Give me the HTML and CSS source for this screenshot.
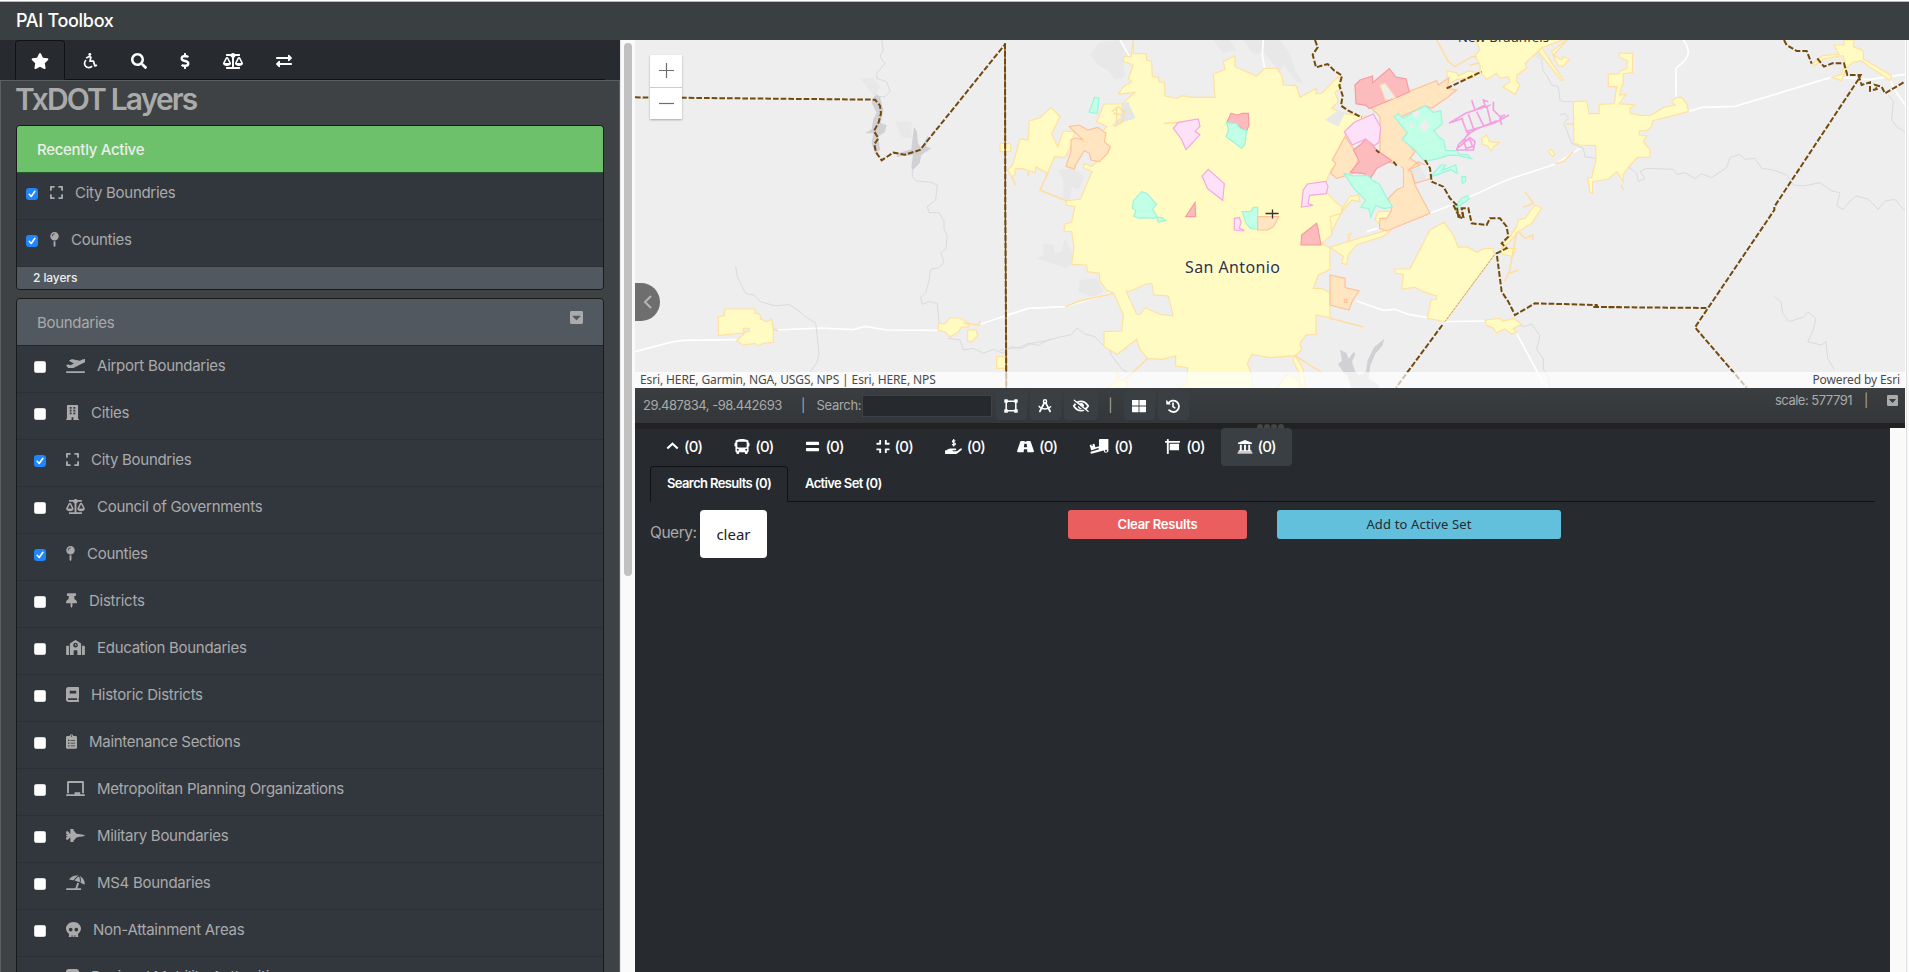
FILE: index.html
```html
<!DOCTYPE html>
<html lang="en">
<head>
<meta charset="utf-8">
<title>PAI Toolbox</title>
<link rel="stylesheet" href="styles.css">
</head>
<body>
<svg class="defs" width="0" height="0">
  <symbol id="star" viewBox="0 0 576 512"><path d="M259.3 17.8L194 150.2 47.9 171.5c-26.2 3.8-36.7 36.1-17.7 54.6l105.7 103-25 145.5c-4.5 26.3 23.2 46 46.4 33.7L288 439.6l130.7 68.7c23.2 12.2 50.9-7.4 46.4-33.7l-25-145.5 105.7-103c19-18.5 8.5-50.8-17.7-54.6L382 150.2 316.7 17.8c-11.7-23.6-45.6-23.9-57.4 0z"/></symbol>
  <symbol id="access" viewBox="0 0 512 512"><circle cx="250" cy="46" r="46"/><path d="M150 150l85-40 50 30-30 120h110l45 150 50-15" fill="none" stroke="currentColor" stroke-width="56" stroke-linecap="round" stroke-linejoin="round"/><path d="M130 230a135 135 0 1 0 190 190" fill="none" stroke="currentColor" stroke-width="54"/></symbol>
  <symbol id="search" viewBox="0 0 512 512"><path d="M505 442.7L405.3 343c-4.5-4.5-10.6-7-17-7H372c27.6-35.3 44-79.7 44-128C416 93.1 322.9 0 208 0S0 93.1 0 208s93.1 208 208 208c48.3 0 92.7-16.4 128-44v16.3c0 6.4 2.5 12.5 7 17l99.7 99.7c9.4 9.4 24.6 9.4 33.9 0l28.3-28.3c9.4-9.4 9.4-24.6.1-34zM208 336c-70.7 0-128-57.2-128-128 0-70.7 57.2-128 128-128 70.7 0 128 57.2 128 128 0 70.7-57.2 128-128 128z"/></symbol>
  <symbol id="dollar" viewBox="0 0 288 512"><path d="M209.2 233.4l-108-31.6C88.7 198.2 80 186.5 80 173.5c0-16.3 13.2-29.5 29.5-29.5h66.3c12.2 0 24.2 3.7 34.2 10.5 6.1 4.1 14.3 3.1 19.5-2l34.8-34c7.1-6.9 6.1-18.4-1.8-24.5C238 74.8 207.4 64.1 176 64V16c0-8.8-7.2-16-16-16h-32c-8.8 0-16 7.2-16 16v48h-2.5C45.8 64-5.4 118.7.5 183.6c4.2 46.1 39.4 83.6 83.8 96.6l102.5 30c12.5 3.7 21.2 15.3 21.2 28.3 0 16.3-13.2 29.5-29.5 29.5h-66.3C100 368 88 364.3 78 357.5c-6.1-4.1-14.3-3.1-19.5 2l-34.8 34c-7.1 6.9-6.1 18.4 1.8 24.5 24.5 19.2 55.1 29.9 86.5 30v48c0 8.800 7.200 16 16 16h32c8.800 0 16-7.200 16-16v-48.200c46.600-.9 90.300-28.600 105.700-72.700 21.500-61.600-14.600-124.800-72.500-141.700z"/></symbol>
  <symbol id="scale" viewBox="0 0 640 512"><path d="M256 336h-.02c0-16.18 1.34-8.73-85.05-181.51-17.65-35.29-68.19-35.36-85.87 0C-2.06 328.75.02 320.33.02 336H0c0 44.18 57.31 80 128 80s128-35.82 128-80zM128 176l72 144H56l72-144zm511.98 160c0-16.18 1.34-8.73-85.05-181.51-17.65-35.29-68.19-35.36-85.87 0-87.12 174.26-85.04 165.84-85.04 181.51H384c0 44.18 57.31 80 128 80s128-35.82 128-80h-.02zM440 320l72-144 72 144H440zm88 128H352V153.25c23.51-10.29 41.16-31.48 46.39-57.25H528c8.84 0 16-7.16 16-16V48c0-8.84-7.16-16-16-16H383.64C369.04 12.68 346.09 0 320 0s-49.04 12.68-63.64 32H112c-8.84 0-16 7.16-16 16v32c0 8.84 7.16 16 16 16h129.61c5.23 25.76 22.87 46.96 46.39 57.25V448H112c-8.84 0-16 7.16-16 16v32c0 8.84 7.16 16 16 16h416c8.84 0 16-7.16 16-16v-32c0-8.84-7.16-16-16-16z"/></symbol>
  <symbol id="exchange" viewBox="0 0 512 512"><path d="M0 168v-16c0-13.255 10.745-24 24-24h360V80c0-21.367 25.899-32.042 40.971-16.971l80 80c9.372 9.373 9.372 24.569 0 33.941l-80 80C409.956 271.982 384 261.456 384 240v-48H24c-13.255 0-24-10.745-24-24zm488 152H128v-48c0-21.314-25.862-32.08-40.971-16.971l-80 80c-9.372 9.373-9.372 24.569 0 33.941l80 80C102.057 463.997 128 453.437 128 432v-48h360c13.255 0 24-10.745 24-24v-16c0-13.255-10.745-24-24-24z"/></symbol>
  <symbol id="pin" viewBox="0 0 288 512"><path d="M112 316.94v156.69l22.02 33.02c4.75 7.12 15.22 7.12 19.97 0L176 473.63V316.94c-10.39 1.92-21.06 3.06-32 3.06s-21.61-1.14-32-3.06zM144 0C64.47 0 0 64.47 0 144s64.47 144 144 144 144-64.47 144-144S223.53 0 144 0zm0 76c-37.5 0-68 30.5-68 68 0 6.62-5.38 12-12 12s-12-5.38-12-12c0-50.73 41.28-92 92-92 6.62 0 12 5.38 12 12s-5.38 12-12 12z"/></symbol>
  <symbol id="tack" viewBox="0 0 384 512"><path d="M298.028 214.267L285.793 96H328c13.255 0 24-10.745 24-24V24c0-13.255-10.745-24-24-24H56C42.745 0 32 10.745 32 24v48c0 13.255 10.745 24 24 24h42.207L85.972 214.267C37.465 236.82 0 277.261 0 328c0 13.255 10.745 24 24 24h136v104.007c0 1.242.289 2.467.845 3.578l24 48c2.941 5.882 11.364 5.893 14.311 0l24-48a8.008 8.008 0 0 0 .845-3.578V352h136c13.255 0 24-10.745 24-24-.001-51.183-37.983-91.42-85.973-113.733z"/></symbol>
  <symbol id="expand" viewBox="0 0 448 512"><path d="M0 180V56q0-24 24-24h124q12 0 12 12v40q0 12-12 12H64v84q0 12-12 12H12q-12 0-12-12zM288 44v40q0 12 12 12h84v84q0 12 12 12h40q12 0 12-12V56q0-24-24-24H300q-12 0-12 12zM436 320h-40q-12 0-12 12v84h-84q-12 0-12 12v40q0 12 12 12h124q24 0 24-24V332q0-12-12-12zM160 468v-40q0-12-12-12H64v-84q0-12-12-12H12q-12 0-12 12v124q0 24 24 24h124q12 0 12-12z"/></symbol>
  <symbol id="plane-up" viewBox="0 0 640 512"><path d="M16 448h608q16 0 16 16v32q0 16-16 16H16q-16 0-16-16v-32q0-16 16-16zM80 341q-10-1-17-9L4 267q-8-12 5-20l52-27q10-5 20 0l61 31 124-64L105 102q-14-9 0-19l82-42q14-7 30-2l253 57 83-43c44-22 95-32 133-1 21 32-14 77-66 104L250 338q-15 6-30 6z"/></symbol>
  <symbol id="building" viewBox="0 0 448 512"><path fill-rule="evenodd" d="M436 480h-20V24q0-24-24-24H56Q32 0 32 24v456H12q-12 0-12 12v20h192v-84q0-12 12-12h40q12 0 12 12v84h192v-20q0-12-12-12zM128 64h64v64h-64zM256 64h64v64h-64zM128 160h64v64h-64zM256 160h64v64h-64zM128 256h64v64h-64zM256 256h64v64h-64z"/></symbol>
  <symbol id="school" viewBox="0 0 640 512"><path fill-rule="evenodd" d="M0 224v272q0 16 16 16h80V192H32q-32 0-32 32zM544 192v320h80q16 0 16-16V224q0-32-32-32zM498 115L338 8q-18-12-36 0L142 115q-14 10-14 26v371h128V368q0-16 16-16h96q16 0 16 16v144h128V141q0-16-14-26zM320 96a80 80 0 1 1 0 160 80 80 0 0 1 0-160zM304 128v58h60v-28h-32v-30z"/></symbol>
  <symbol id="book" viewBox="0 0 448 512"><path fill-rule="evenodd" d="M448 360V24q0-24-24-24H96Q0 0 0 96v320q0 96 96 96h328q24 0 24-24v-16q0-11-9-19-7-27 0-74 9-8 9-19zM128 134q0-6 6-6h212q6 0 6 6v84q0 6-6 6H134q-6 0-6-6zM381 448H96q-32-3-32-32t32-32h285q-4 35 0 64z"/></symbol>
  <symbol id="clip" viewBox="0 0 384 512"><path fill-rule="evenodd" d="M336 64h-80Q256 0 192 0t-64 64H48Q0 64 0 112v352q0 48 48 48h288q48 0 48-48V112q0-48-48-48zM192 40q24 0 24 24t-24 24-24-24 24-24zM72 196h48v40H72zM160 200h160v32H160zM72 292h48v40H72zM160 296h160v32H160zM72 388h48v40H72zM160 392h160v32H160z"/></symbol>
  <symbol id="board" viewBox="0 0 640 512"><path d="M96 64h448v352h64V40q0-40-38-40H70Q32 0 32 40v376h64zM624 448H480v-64H288v64H16q-16 0-16 16v32q0 16 16 16h608q16 0 16-16v-32q0-16-16-16z"/></symbol>
  <symbol id="jet" viewBox="0 0 640 512"><path d="M544 224l-128-16-49-16h-15L228 54h25q25-2 28-11t-41-11H144v160h-14L64 112H16L0 128v64l16 16v16h48v8L0 240v32l64 8v8H16v16L0 320v64l16 16h48l66-80h14v160h96q42-2 41-11t-28-11h-25l124-138h15l49-16 128-16q96-22 96-32t-96-32z"/></symbol>
  <symbol id="beach" viewBox="0 0 640 512"><path d="M115 137C185 37 312-10 430 28c-62 20-125 75-170 148l-139-17q-14-8-6-22zM460 38c105 46 180 155 176 274q-3 12-18 8l-127-58c20-90 12-170-31-224zM290 188c50-80 104-125 150-140 30 44 40 120 20 203zM496 448H382l59-163-60-22-67 185H16q-16 0-16 16v32q0 16 16 16h480q16 0 16-16v-32q0-16-16-16z"/></symbol>
  <symbol id="skull" viewBox="0 0 512 512"><path fill-rule="evenodd" d="M256 0C115 0 0 100 0 224c0 70 37 132 94 173 10 7 15 18 13 30l-13 66q-2 19 15 19h83v-56q0-8 8-8h16q8 0 8 8v56h64v-56q0-8 8-8h16q8 0 8 8v56h83q17 0 15-19l-13-66c-2-12 3-23 13-30 57-41 94-103 94-173C512 100 397 0 256 0zM160 320a64 64 0 1 1 0-128 64 64 0 0 1 0 128zM352 320a64 64 0 1 1 0-128 64 64 0 0 1 0 128z"/></symbol>
  <symbol id="caret-box" viewBox="0 0 448 512"><path fill-rule="evenodd" d="M48 32h352q48 0 48 48v352q0 48-48 48H48q-48 0-48-48V80q0-48 48-48zM92 220l123 124q9 8 18 0l123-124q12-22-9-28H101q-21 6-9 28z"/></symbol>
  <symbol id="chev" viewBox="0 0 448 512"><path d="M45 325L224 160l179 165" fill="none" stroke="currentColor" stroke-width="74"/></symbol>
  <symbol id="bus" viewBox="0 0 512 512"><path fill-rule="evenodd" d="M488 128h-8V80c0-45-99-80-224-80S32 35 32 80v48h-8q-24 0-24 24v80q0 24 24 24h8v160q0 32 32 32v32q0 32 32 32h32q32 0 32-32v-32h192v32q0 32 32 32h32q32 0 32-32v-32q32 0 32-32V256h8q24 0 24-24v-80q0-24-24-24zM112 400a32 32 0 1 1 0-64 32 32 0 0 1 0 64zM128 288q-32 0-32-32V128q0-32 32-32h256q32 0 32 32v128q0 32-32 32zM400 400a32 32 0 1 1 0-64 32 32 0 0 1 0 64z"/></symbol>
  <symbol id="equals" viewBox="0 0 448 512"><rect y="96" width="448" height="112" rx="30"/><rect y="304" width="448" height="112" rx="30"/></symbol>
  <symbol id="compress" viewBox="0 0 448 512"><path d="M436 192H312q-24 0-24-24V44q0-12 12-12h40q12 0 12 12v84h84q12 0 12 12v40q0 12-12 12zM160 168V44q0-12-12-12h-40q-12 0-12 12v84H12q-12 0-12 12v40q0 12 12 12h124q24 0 24-24zM160 468V344q0-24-24-24H12q-12 0-12 12v40q0 12 12 12h84v84q0 12 12 12h40q12 0 12-12zM352 468v-84h84q12 0 12-12v-40q0-12-12-12H312q-24 0-24 24v124q0 12 12 12h40q12 0 12-12z"/></symbol>
  <symbol id="handusd" viewBox="0 0 576 512"><path d="M565 328c-12-11-31-10-43 0l-92 74q-17 14-40 14H272q-16-2-16-16t16-16h78q32-4 34-32t-32-32H192q-60 0-94 27l-47 37H16q-16 0-16 16v96q0 16 16 16h357q23 0 40-14l151-121q24-23 1-49z"/><path d="M350 72q-20-20-55-20c-55 0-55 55-8 68 60 16 72 32 66 56-8 34-80 34-114 2M294 0v260" fill="none" stroke="currentColor" stroke-width="42"/></symbol>
  <symbol id="road" viewBox="0 0 576 512"><path fill-rule="evenodd" d="M573 403L461 80q-8-16-24-16H318l4 32h-68l4-32H139q-16 0-24 16L3 403q-10 45 29 45h192l11-96h106l11 96h192q39 0 29-45zM247 160h82l14 120H233z"/></symbol>
  <symbol id="truck" viewBox="0 0 640 512"><path fill-rule="evenodd" d="M50 376L5 222q-5-15 9-20l46-13 14 50 38-12-14-50 50-14q15-2 20 12l29 103 122-34V32q0-32 32-32h289v368a80 80 0 1 1-158 22L63 505q-16 4-20-10l-16-44q-4-13 10-18l285-79-28-50-225 76q-15 4-19-4zM560 440a36 36 0 1 0 0-72 36 36 0 0 0 0 72z"/></symbol>
  <symbol id="sign" viewBox="0 0 512 512"><path d="M496 64H128V16q0-16-16-16H80Q64 0 64 16v48H16Q0 64 0 80v32q0 16 16 16h48v368q0 16 16 16h32q16 0 16-16V128h368q16 0 16-16V80q0-16-16-16zM160 384h320V160H160z"/></symbol>
  <symbol id="bank" viewBox="0 0 512 512"><path d="M496 128v28q0 12-12 12H28q-12 0-12-12v-28L256 32zM80 192h64v192h80V192h64v192h80V192h64v192h24q24 0 24 24v24H32v-24q0-24 24-24h24zM488 448H24q-24 0-24 24v24h512v-24q0-24-24-24z"/></symbol>
  <symbol id="polygon" viewBox="0 0 512 512"><path d="M80 80H432V432H80z" fill="none" stroke="currentColor" stroke-width="56"/><g><rect x="10" y="10" width="130" height="130" rx="22"/><rect x="372" y="10" width="130" height="130" rx="22"/><rect x="10" y="372" width="130" height="130" rx="22"/><rect x="372" y="372" width="130" height="130" rx="22"/></g></symbol>
  <symbol id="compass" viewBox="0 0 512 512"><g fill="none" stroke="currentColor"><circle cx="256" cy="90" r="60" stroke-width="52"/><path d="M228 140L70 450M284 140l158 310" stroke-width="68" stroke-linecap="round"/><path d="M40 268q45 65 120 82 180 45 300-68" stroke-width="54" stroke-linecap="round"/></g></symbol>
  <symbol id="eye-off" viewBox="0 0 640 512"><path d="M30 256Q150 70 320 70t290 186Q490 442 320 442T30 256z" fill="none" stroke="currentColor" stroke-width="70"/><path d="M320 135a120 120 0 0 1 112 165L230 170q40-35 90-35zM200 235a120 120 0 0 0 170 132z"/><path d="M30 70L570 490" stroke="#3a3f44" stroke-width="70"/><path d="M50 24L604 470" stroke="currentColor" stroke-width="50" stroke-linecap="round"/></symbol>
  <symbol id="grid" viewBox="0 0 512 512"><path d="M18 32h222v208H0V50q0-18 18-18zM272 32h222q18 0 18 18v190H272zM0 272h240v208H18q-18 0-18-18zM272 272h240v190q0 18-18 18H272z"/></symbol>
  <symbol id="history" viewBox="0 0 512 512"><g fill="none" stroke="currentColor"><path d="M90 155a208 208 0 1 1 25 255" stroke-width="66" stroke-linecap="round"/><path d="M256 150v125l65 48" stroke-width="60" stroke-linecap="round"/></g><path d="M8 30l172 172H20q-12 0-12-12z"/></symbol>
  <symbol id="drum" viewBox="0 0 448 512"><path d="M0 100Q0 0 100 0h248q100 0 100 100v412H0z"/></symbol>
  <symbol id="check" viewBox="0 0 12 12"><path d="M3.2 6.3l2 2.2L8.9 3.3" fill="none" stroke="#fff" stroke-width="1.6" stroke-linecap="round" stroke-linejoin="round"/></symbol>
</svg>

<header class="topbar">PAI Toolbox</header>
<div class="workspace">
  <aside class="sidebar">
    <nav class="side-tabs">
      <a class="side-tab active"><svg width="18" height="16"><use href="#star"/></svg></a>
      <a class="side-tab"><svg width="16" height="16"><use href="#access"/></svg></a>
      <a class="side-tab"><svg width="16" height="16"><use href="#search"/></svg></a>
      <a class="side-tab"><svg width="10" height="16"><use href="#dollar"/></svg></a>
      <a class="side-tab"><svg width="20" height="16"><use href="#scale"/></svg></a>
      <a class="side-tab"><svg width="16" height="16"><use href="#exchange"/></svg></a>
    </nav>
    <div class="side-body">
      <h1>TxDOT Layers</h1>
      <section class="card recent">
        <div class="card-head green">Recently Active</div>
        <div class="row"><i class="box on"><svg width="12" height="12"><use href="#check"/></svg></i><svg width="13" height="15"><use href="#expand"/></svg><span>City Boundries</span></div>
        <div class="row"><i class="box on"><svg width="12" height="12"><use href="#check"/></svg></i><svg width="9" height="15"><use href="#pin"/></svg><span>Counties</span></div>
        <div class="card-foot">2 layers</div>
      </section>
      <section class="card layers">
        <div class="card-head">Boundaries<svg width="13" height="15"><use href="#caret-box"/></svg></div>
        <div class="row"><i class="box"></i><svg width="19" height="15"><use href="#plane-up"/></svg><span>Airport Boundaries</span></div>
        <div class="row"><i class="box"></i><svg width="13" height="15"><use href="#building"/></svg><span>Cities</span></div>
        <div class="row"><i class="box on"><svg width="12" height="12"><use href="#check"/></svg></i><svg width="13" height="15"><use href="#expand"/></svg><span>City Boundries</span></div>
        <div class="row"><i class="box"></i><svg width="19" height="15"><use href="#scale"/></svg><span>Council of Governments</span></div>
        <div class="row"><i class="box on"><svg width="12" height="12"><use href="#check"/></svg></i><svg width="9" height="15"><use href="#pin"/></svg><span>Counties</span></div>
        <div class="row"><i class="box"></i><svg width="11" height="15"><use href="#tack"/></svg><span>Districts</span></div>
        <div class="row"><i class="box"></i><svg width="19" height="15"><use href="#school"/></svg><span>Education Boundaries</span></div>
        <div class="row"><i class="box"></i><svg width="13" height="15"><use href="#book"/></svg><span>Historic Districts</span></div>
        <div class="row"><i class="box"></i><svg width="11" height="15"><use href="#clip"/></svg><span>Maintenance Sections</span></div>
        <div class="row"><i class="box"></i><svg width="19" height="15"><use href="#board"/></svg><span>Metropolitan Planning Organizations</span></div>
        <div class="row"><i class="box"></i><svg width="19" height="15"><use href="#jet"/></svg><span>Military Boundaries</span></div>
        <div class="row"><i class="box"></i><svg width="19" height="15"><use href="#beach"/></svg><span>MS4 Boundaries</span></div>
        <div class="row"><i class="box"></i><svg width="15" height="15"><use href="#skull"/></svg><span>Non-Attainment Areas</span></div>
        <div class="row"><i class="box"></i><svg width="13" height="15"><use href="#drum"/></svg><span>Regional Mobility Authorities</span></div>
      </section>
    </div>
  </aside>
  <div class="scroll-track"><div class="scroll-thumb"></div></div>
  <main class="main">
    <div class="map">
      <svg class="map-svg" viewBox="635 40 1270 348" width="1270" height="348">
        <g transform="translate(1000 35) scale(.33333)">
          <g class="shade">
            <path d="M270 60l30-40 60-5 30 40-20 30 5 40-30 10-20-30-25-10z"/><path d="M640 15l50 0 20 30-40 10zM730 15l110 0 30 40 15 50 25 40-20-5-40-50-10 20-50-60-30 10z"/><path d="M130 625l30 5 5 25 20-5 10-40 20 40 5 30-20 20-30-10-60-20 20-10z"/><path d="M240 735l50-5 20 40-30 15-45-15z"/><path d="M175 405l40-5 40 25-20 40-20-10-5 50-20-10 0-60z"/><path d="M1200 390l50-10 30 50-30 20z"/>
          </g>
          <path class="road" d="M0 848L85 820 195 815 330 775M360 15l35 60M790 15l-3 45 8 45"/>
          <path class="river" d="M0 945l60-8 25-12 30 6 25-14 35-10 40-8 15-20 25 18 30 8 20 22 20 5 10 30 30 40 20 12"/>
          <path class="city" d="M400 15V55L438 57 440 75 455 80 457 125 475 127 477 140 493 143 495 183 530 190 548 182 575 187 645 187 640 118 675 103 670 80 705 62 705 95 770 123 795 100 830 100 845 120 850 150 888 152 900 187 950 160 948 176 965 175 1015 125 1025 160 1005 172 1015 200 995 220 1030 235 1100 245 1035 295 1060 380 995 400 970 460 1005 500 1025 515 1025 535 995 545 995 600 965 625 990 640 990 703 955 720 940 760 965 760 990 775 990 848 948 840 948 898 918 900 900 925 905 945 885 962 810 968 755 958 742 985 755 1020 755 1060H535L560 1045 563 998 527 993 527 963 485 973 443 970 420 945 410 913 352 958 312 935 312 890 365 888 370 840 342 775 320 765 300 740 298 715 262 710 260 690 215 688 222 635 215 590 192 588 195 567 215 562 225 515 198 510 200 498 242 492 265 435 277 410 250 398 252 385 275 395 300 370 290 310 320 275 290 260 312 207 365 207 405 172 355 178 370 155 395 140 385 130 400 90 370 80 372 65 393 65z"/>
          <path class="land" d="M378 768L392 768 435 748 455 745 462 780 505 783 520 843 480 838 435 818 422 838 410 838z"/>
          <path class="nook" d="M365 205l20-5 10 25 12 25-35 10-40 15 30-30z"/>
          <path class="citylite" d="M335 230l20-15 18 15-5 30-25 15M340 235l25 5M350 215v50"/>
          <path class="city" d="M88 258L120 248 153 218 180 245 165 275 155 297 173 335 190 288 225 290 210 340 195 367 163 365 143 415 108 395 105 413 65 400 45 402 45 420 35 425 23 405 38 390 60 312 85 315zM0 325h30l2 5v20H0z"/>
          <path class="citylite" d="M143 415L120 465 200 498M195 815L240 798 340 775M443 970L375 1035M885 962l80 50M35 425l12 25M85 410v14M493 265l40-2"/>
          <path class="city" d="M885 962l25 40 5 58h-15l-2-45-20-40zM830 1060l30-40 30 10 20 30zM320 1060l30-20v-30l10 25 20 5v20z"/>
          <path class="orange" d="M208 275l30-5 25 15 30-8 25 18-5 25 18 15-8 20-25 25-25-5-5-20-15-8-25 40-5 15-25-8 15-45v-35l15-5 20 5z"/>
          <path class="land" d="M248 320l15 3-10 12z"/>
          <path class="teal" d="M283 187l14 3-5 46-25-5 10-25z"/>
          <path class="pink" d="M520 280l15-18 60-10 5 22-15 15 15 10-42 45-14-32zM625 403l48 43-5 50-45-35-17-38zM703 550l15-3 5 15-5 18 14 5-2 3-27-3z"/>
          <path class="red" d="M680 263l13-28 20 5 15-5h17l2 35-8 20-22-18zM585 503l2 42h-30z"/>
          <path class="teal" d="M680 263l30 3 10 14 20 7-5 40-10 13-47-35 8-20zM425 470l15 5 30 33-12 15 14 22-12 5-20-2-20 2-18-5 5-18-10-8 3-22zM470 547h15l12 10-22 4zM727 530h25l8-13h13v65h-20l-15-17z"/>
          <path class="orange" d="M773 545h63l-15 30-20 10h-28z"/>
        </g>
        <g transform="translate(1300 35) scale(.33333)">
          <path class="road" d="M200 590L390 535 460 508 620 435 765 388 840 340M170 798l80 28 35-3 40 15 60 10 50 12 120-2M650 895l80 150"/>
          <path class="river" d="M720 45c10 40 0 60 20 75l15 30 20 5 5 40 10 5 25 0M780 240l15-5 10 15-15 15 10 20 15 40 35 15 5 25 30 5M655 870l20 5 20-8 25 35-10 40 20 30 0 30 15 25 5 35"/>
          <path class="water" d="M120 945l18 8 8 18 15-20 5 5-10 25 10 30 12 10 20-10 5-35 20-40 30-25-5 20-22 25-15 35-5 40 25 15 10 15h-85l-15-40-15-15-12-20 12-8z"/>
          <path class="shade" d="M75 255l40-30 20 10-20 40zM700 60l20-20 18 20-12 20z"/>
          <path class="city" d="M520 0L540 45 525 62 540 90 540 110 560 133 590 115 600 130 625 125 630 140 608 155 645 178 660 150 650 140 650 120 680 100 675 85 725 38 800 10z"/>
          <path class="city" d="M725 38l65 97-5 2-70-87zM755 50l50-40-45 50 25 15 5-10 18 8-20 22-15-5z"/>
          <path class="city" d="M440 108l30 5 5 10 30-15 25 5-10 15-50 5-25 15z"/>
          <path class="citylite" d="M410 15l35 65 20 15 50-30 15 0M90 850l100 26M510 90l25-5"/>
          <path class="city" d="M90 637l90-28 70-20-10-20-15-15 10-25h45l-10 60-20 15-80 25-25 30-5 30-15-5 5-20-15-10zM95 590l-5-45 35-10 5-20 20-30 25-5 5 20-25-5-30 35zM145 600l8-5-8 25z"/>
          <path class="city" d="M432 562L390 585 330 702 285 702 285 715 310 718 305 762 345 757 370 770 410 783 410 793 393 795 382 850 435 860 583 660 578 640 555 640 530 652 500 635 475 637 460 600z"/>
          <path class="city" d="M555 855l45-5 10 8 30-8 25 18-25 12 10 12-15 5-20-15-25 12-10-15-20-8zM545 310l15-10 8 20 30 3-15 10-10 15-10-15-15-5zM745 348l8-5 12 15-8 6z"/>
          <path class="city" d="M605 640l20-15 30-35 40-25 30-45-20-10-30 40-20 5-5 20-20 30-22 20-5 30 35 10 10-25z"/>
          <path class="citylite" d="M675 470l25 35-30 12M650 590l-22 120-14 28M628 715l28-10M655 590l20 20 22-10 3 15"/>
          <path class="orange" d="M210 215L410 137 415 150 447 128 442 160 470 165 445 185 395 220 375 213 300 247 325 290 310 310 345 350 330 370 360 390 325 405 335 410 345 450 390 535 260 588 238 580 240 550 260 550 275 525 265 490 290 465 310 455 310 400 280 385 240 375 240 245zM135 305l25 35 20 15-20 60-50 15-18-15 15-30-10-10zM90 720l45 10v28l42 10-20 30-10 27-57-15z"/>
          <path class="orangeline" d="M325 405l30-25 20 10M335 415l10 30 50-15M133 795l8-3v10h-8z"/>
          <path class="land nostroke" d="M245 392l50-5 13 15v52l-45 15-25-50z"/>
          <path class="red" d="M165 150l15-15 38-12v20l50-42 20 25 30 5 10 40-35 15-85 35-10-10-30-5zM160 345l20-15 20-20 30 35 45 32-45 23-25 40-12-24-42-4 27-33z M5 600l45-35 5 20 8 45H3z"/>
          <path class="land" d="M240 150l15-5 32 43-30 8z"/>
          <path class="pink" d="M133 290l30-28 57-25 22 40-5 45-15 10-25-20-40 18zM10 465l12-18 55-8 7 15-5 22-50 5-5 25 15 5-35 5z"/>
          <path class="teal" d="M283 245l12-8 15 12 65-37 25 20 22-5 5 40-25 20 15 20 15 10 5 30 35 0 5 10 25 2 12 12-40-10-30 0-30 10-40 8-30-35-37-30 15-20zM132 415l30 8 40-2 15 15 20 10 25 45 15 25-25 5-25-10-15 35-5-25-25-5 15-20-35-35zM392 425l30-35 15 0-10 15 40-15 5 25-20-10-30 10zM485 425h12v15l-10 5zM465 512l20-22 18-8 5 10-30 20-10 20z"/>
          <path class="land nostroke" d="M335 235l20-10 5 15-15 10zM358 275l15-25 15 20-15 25zM330 265h8v12h-8z"/>
          <path class="magenta" d="M447 265l50-30 75-25M455 262l35-12M515 195l10 30 30-15-5-15 15 5M485 250l15 40 8 10M505 238l18 50M530 230l22 45M560 212l12 50M497 290l85-25 45-25M500 300l30-18 60-25M580 200l0 25 20 20 15-5M605 270l-5-20 10-10M510 290l-15 20-20 20-5 15h50l5-25-15-12-35 30M490 315l20 0 8 20-20 5z"/>
          <path class="citylite" d="M820 350l-30 30-25 6M797 267h25"/>
        </g>
        <g transform="translate(1580 35) scale(.33333)">
          <path class="road" d="M310 15c30 40 10 60-22 85v85M325 230L365 217 465 214 760 125M780 128l90 5 105-15M930 130c10 40 35 60 45 80"/>
          <path class="river" d="M145 395l25 20 5 25 20-10-15-20 20-10 80 3 10 15 25-5 30 18 20-15 30 12 45-30 10-30 30-10 15 15 30-3 20 30 35 5 40 15 20 30 30 3 50-10 35 25 25 5-10 40 20 10 20-25 20-15 35 10 30 30 20-25 30-5 25 30 30 15 15 30M925 180l15 20-5 55 15 20 25 15M583 785l20 15 5 35 20 25 45-15 10-15 25 20-10 40-15 30 40 10 15-10 5 50 20 35"/>
          <path class="city" d="M-20 200L20 198 27 236 57 236 57 208 103 206 110 155 85 155 85 118 118 116 120 108 140 102 143 78 118 66 118 54 158 55 158 113 130 116 130 142 118 180 138 178 118 206 165 210 150 220 150 235 185 242 215 240 250 218 285 210 275 200 290 188 305 187 322 210 325 230 217 258 215 275 200 287 178 288 178 300 200 302 190 320 210 345 210 366 172 367 147 395 130 418 130 440 110 410 85 432 38 440 38 475 30 472 23 428 35 428 48 375 47 332 0 330-18 325z"/>
          <path class="city" d="M762 30l30 0 0-15h30l-2 20 30 12 0 25 35 20 50 30-5 15-20-15-40-25-25-20-25 5-20 15-15 40-30-10 30-10 10-35-5-20-60 10-25 20-8-5 30-25 50-5z"/>
          <path class="citylite" d="M123 450l8 15"/>
        </g>
        <g transform="translate(630 35) scale(.33333)">
          <path class="road" d="M15 950L130 920 160 916 320 914M440 885L570 879 670 884 705 874 770 885 925 886M1050 868L1195 820"/>
          <path class="river" d="M755 15l5 30-10 20 15 20-25 30 0 15 30 10 10 30-15 15-25 0M847 400l0 25 10 12 45 5 20 8-5 45-25 20 5 18 30 0 15 25 0 25 10 20-5 40-15 10 10 30-15 15-25 5-5 35-10 35-15 15 5 20 20-8 25 5 5 60M317 695l5 30 10 20 15 30 25 5 20 20 40 12 45-3 25 15 30 25 25 15 10 90-5 25-20 30M955 910l35 5 10 30 30-5 30 15 30-12 30 12 20-20 35 5 30-15 55-10"/>
          <path class="water" d="M735 175l15 10 10 40-8 40 18 5-5 20-20 15 5 40-15 10-10-30 5-30-25 0 20-12 5-30 10-20-15-30zM852 275l9 15 3 35 10 15 20-40-5 35 15 5-30 20-5 25-20 20-5-10 5-35-50 5 10-12 35-10z"/>
          <path class="shade" d="M690 130l40 0 20 25-15 30-25-30zM795 260l50 0 0 50-30-5z"/>
          <path class="city" d="M285 822H375V835L390 838 392 852 410 860 425 852 430 885 430 922 400 925 385 932 375 925 340 930 320 918 345 893 265 902 265 845 283 842zM925 865l20 2 15-18 30 0 25 15 0 12-20 0-10 15-25 15-15-15-20-5zM1013 885l25 0 5 15-15 20-15-2zM1100 965h28v35h-28z"/>
          <path class="land" d="M340 880h18v10h-18z"/>
          <path class="citylite" d="M1000 865l48 5 2-12M430 882l15 5"/>
          <path class="county" d="M15 187L735 194 750 212 753 235 746 262 732 288 745 310 733 328 738 352 755 376 770 366 790 353 825 359 860 348 870 345 1125 28"/>
          <path class="county thin" d="M1125 25L1126 530 1129 1060"/><path class="county" d="M1125 25L1126 530 1129 1060"/>
        </g>
        <g transform="translate(1300 35) scale(.33333)">
          <path class="county" d="M45 15l8 22-15 22 10 38 35-10 20 20 23 15-8 30 10 30-5 30 22 15 40 20M228 345l10 8M280 380l10 12M440 160l105-50M375 375l15 25 5 40 35 15 20 35 20 20 5 35 15 5-5-30 20 0 10 45 45 5 10-20 30 0 20 25 5 30-20 20 15 15-30 15 15 115 20 30 20 40 60-35 185 5 3 6H960"/>
          <path class="county faint" d="M583 660L435 860"/><path class="county" d="M427 870L288 1058M460 510l15 30 15 5-5-25"/>
        </g>
        <g transform="translate(1580 35) scale(.33333)">
          <path class="county" d="M40 816l345 3M612 15l8 15 30 18 30 0 15 38M712 70l20 25 25-10 35 0 10 35 40 0-8 15L583 515l0 10L345 877 500 1058M835 120l10 30 25-8 0 25 20-5-5-12 20 5 10 20 65-38"/>
        </g>
        <text class="place" x="1185" y="272.500" textLength="95">San Antonio</text>
        <text class="place small" x="1458" y="42" textLength="91">New Braunfels</text>
        <path d="M1265.500 213.500h13M1272.500 209.500v9" stroke="#333" stroke-width="1.300"/>
      </svg>
      <div class="zoomer"><span><svg width="15" height="15"><path d="M7.500 0v15M0 7.500h15"/></svg></span><span><svg width="15" height="15"><path d="M0 7.500h15"/></svg></span></div>
      <div class="collapse"><svg width="9" height="14"><path d="M8 1L2 7l6 6"/></svg></div>
      <div class="attribution"><span class="credits">Esri, HERE, Garmin, NGA, USGS, NPS | Esri, HERE, NPS</span><span class="powered">Powered by Esri</span></div>
    </div>
    <div class="toolbar">
      <span class="coords">29.487834, -98.442693</span><span class="sep">|</span><label>Search:</label><i class="field"></i>
      <div class="tools">
        <b class="tool"><svg width="14" height="14"><use href="#polygon"/></svg></b>
        <b class="tool"><svg width="14" height="14"><use href="#compass"/></svg></b>
        <b class="tool wide"><svg width="16" height="14"><use href="#eye-off"/></svg></b>
      </div>
      <span class="sep2">|</span>
      <div class="tools"><b class="tool"><svg width="14" height="14"><use href="#grid"/></svg></b><b class="tool"><svg width="14" height="14"><use href="#history"/></svg></b></div>
      <div class="scale-box"><span class="scale-text">scale: 577791</span><span class="scale-sep">|</span><svg width="11" height="13"><use href="#caret-box"/></svg></div>
    </div>
    <div class="splitter"><i></i><i></i><i></i><i></i></div>
    <div class="lower">
      <div class="panel">
        <nav class="pills">
          <a class="pill"><svg width="13" height="15"><use href="#chev"/></svg><span>(0)</span></a>
          <a class="pill"><svg width="16" height="15"><use href="#bus"/></svg><span>(0)</span></a>
          <a class="pill"><svg width="15" height="15"><use href="#equals"/></svg><span>(0)</span></a>
          <a class="pill"><svg width="14" height="15"><use href="#compress"/></svg><span>(0)</span></a>
          <a class="pill"><svg width="17" height="15"><use href="#handusd"/></svg><span>(0)</span></a>
          <a class="pill"><svg width="17" height="15"><use href="#road"/></svg><span>(0)</span></a>
          <a class="pill"><svg width="20" height="15"><use href="#truck"/></svg><span>(0)</span></a>
          <a class="pill"><svg width="17" height="15"><use href="#sign"/></svg><span>(0)</span></a>
          <a class="pill active"><svg width="16" height="15"><use href="#bank"/></svg><span>(0)</span></a>
        </nav>
        <nav class="subtabs"><a class="subtab active">Search Results (0)</a><a class="subtab">Active Set (0)</a></nav>
        <div class="query">
          <div class="query-left"><span>Query:</span><button class="btn-clear">clear</button></div>
          <button class="btn danger">Clear Results</button>
          <button class="btn info">Add to Active Set</button>
        </div>
      </div>
      <div class="panel-track"></div>
    </div>
  </main>
  <div class="edge"></div>
</div>
</body>
</html>
```
FILE: styles.css
```css
* { box-sizing: border-box; }
html, body { margin: 0; height: 972px; overflow: hidden; }
body { display: flex; flex-direction: column; font-family: Inter, "Liberation Sans", sans-serif; font-size: 15px; color: #aaa; background: #fff; }
svg { display: block; fill: currentColor; flex: none; }
.defs { position: absolute; }
.topbar { height: 40px; flex: none; border-top: 1px solid #fff; box-shadow: inset 0 1px #b5b8ba; background: #3a3f42; color: #fff; font-size: 18px; font-weight: 500; line-height: 40px; padding-left: 16px; letter-spacing: -.3px; }
.workspace { display: flex; flex: 1; min-height: 0; }

.sidebar { width: 620px; height: 932px; overflow: hidden; background: #272b30; flex: none; }
.side-tabs { height: 40px; margin: 0 15px; display: flex; border-bottom: 1px solid #101214; }
.side-tab { color: #fff; padding: 0 15.5px; display: flex; align-items: center; height: 40px; border: 1px solid transparent; }
.side-tab svg { margin-top: 1px; }
.side-tab.active { border-color: #101214; border-bottom-color: #272b30; border-radius: 4px 4px 0 0; padding: 0 15px; }
.side-body { height: 892px; border: 1px solid #5b5f61; border-bottom: 0; background: #3e4244; padding: 0 15px; }
h1 { margin: 0 0 0 -1px; height: 44px; font-size: 30px; line-height: 37px; font-weight: 600; letter-spacing: -1.85px; color: #aaa; white-space: nowrap; }
.card { border: 1px solid #17191b; border-radius: 4px; background: #32373e; overflow: hidden; }
.card-head { height: 47px; border-bottom: 1px solid #212529; background: #51585f; padding: 0 20px; display: flex; align-items: center; justify-content: space-between; letter-spacing: -.3px; }
.card-head svg { margin-bottom: 9px; }
.card-head.green { background: #6ec16b; border-bottom-color: #265a2c; color: #e9efe9; font-weight: 500; }
.row { height: 47px; border-bottom: 1px solid #2b3036; display: flex; align-items: flex-start; padding: 11px 0 0 17px; color: #aaa; }
.row > svg { margin: 1px 12px 0 20px; }
.row span { line-height: 18px; letter-spacing: -.28px; white-space: nowrap; }
.recent .row { padding-left: 9px; }
.recent .row > svg { margin-left: 12px; }
.box { width: 12px; height: 12px; margin-top: 4px; border-radius: 3px; background: #fff; flex: none; box-shadow: inset 0 0 0 .5px #bbb; }
.box.on { background: #1f85fb; box-shadow: none; }
.card-foot { height: 22px; background: #51585f; color: #eee; font-size: 12px; font-weight: 500; line-height: 21px; padding-left: 16px; letter-spacing: -.1px; }
.recent { height: 165px; margin-bottom: 8px; }

.scroll-track { width: 15px; background: #fafafa; border-left: 1px solid #e4e4e4; padding: 3px 3px 0; flex: none; }
.scroll-thumb { height: 533px; width: 8px; border-radius: 4px; background: #c1c1c1; }

.main { width: 1270px; display: flex; flex-direction: column; flex: none; }
.edge { width: 4px; background: #fafafa; box-shadow: inset 1px 0 #fff, inset 2px 0 #e0e0e0; }
.map { position: relative; height: 348px; overflow: hidden; background: #eee; flex: none; }
.city { fill: #fffbc2; stroke: #ffe0a0; stroke-width: 3.5; }
.citylite { fill: none; stroke: #ffdda0; stroke-width: 4.5; }
.orange { fill: #ffe5c0; stroke: #ffc09a; stroke-width: 3.5; }
.orangeline { fill: none; stroke: #ffc09a; stroke-width: 3.5; }
.red { fill: #fcbcbe; stroke: #f89aa0; stroke-width: 3.5; }
.teal { fill: #c1ffe7; stroke: #9af5dc; stroke-width: 3.5; }
.pink { fill: #fde1f8; stroke: #f4a8dd; stroke-width: 3.5; }
.magenta { fill: none; stroke: #f4a0e2; stroke-width: 5; }
.land { fill: #eee; stroke: #ffdda0; stroke-width: 3; }
.nook { fill: #e6e6e6; }
.nostroke { stroke: none; }
.shade { fill: #e8e8e8; }
.water { fill: #d0d0d5; }
.river { fill: none; stroke: #dadade; stroke-width: 3; stroke-linejoin: round; }
.road { fill: none; stroke: #fff; stroke-width: 5; }
.county { fill: none; stroke: #734a0e; stroke-width: 6; stroke-dasharray: 17 6; }
.county.thin { stroke-width: 4; stroke-dasharray: none; }
.county.faint { stroke: #c4a578; stroke-width: 3; stroke-dasharray: 8 3; }
.place { font: 16px "Noto Sans", sans-serif; fill: #343434; paint-order: stroke; stroke: #fffde0; stroke-width: 2px; }
.place.small { font-size: 13px; stroke: none; }
.zoomer { position: absolute; left: 15px; top: 15px; width: 32px; background: #fff; box-shadow: 0 1px 2px rgba(0,0,0,.3); }
.zoomer span { display: flex; height: 31px; align-items: center; justify-content: center; }
.zoomer span:first-child { height: 33px; border-bottom: 1px solid #ccc; padding-bottom: 1px; }
.zoomer path { stroke: #6e6e6e; stroke-width: 1.2; }
.collapse { position: absolute; left: 0; top: 243px; width: 25px; height: 38px; border-radius: 0 19px 19px 0; background: #6e6e6e; display: flex; align-items: center; padding-left: 8px; }
.collapse path { fill: none; stroke: #b5b5b5; stroke-width: 2; }
.attribution { position: absolute; left: 0; right: 0; bottom: 0; height: 16px; background: rgba(255,255,255,.67); display: flex; justify-content: space-between; padding: 0 5px; font: 12px/16px "Noto Sans", sans-serif; letter-spacing: -.12px; color: #4a4a4a; }
.toolbar { height: 35px; background: linear-gradient(#3a3e41, #33373a); display: flex; align-items: center; flex: none; padding-left: 8px; font-size: 13px; color: #aaa; white-space: nowrap; }
.toolbar > span, .toolbar label { padding-bottom: 1px; }
.coords { width: 158px; letter-spacing: -.48px; }
.sep { width: 15.5px; }
.toolbar label { width: 45px; letter-spacing: -.3px; }
.field { width: 130px; height: 22px; background: #26292d; border: 1px solid #3d4246; margin-right: 4px; }
.tools { display: flex; gap: 3px; }
.tool { width: 31px; height: 29px; border-radius: 4px; background: #3a3f43; color: #fff; display: flex; align-items: center; justify-content: center; }
.tool.wide { width: 34px; }
.sep2 { width: 26px; text-align: center; }
.scale-box { margin-left: auto; align-self: flex-start; display: flex; padding: 4px 7px 0 0; line-height: 17px; }
.scale-text { width: 89px; letter-spacing: -.5px; }
.scale-sep { width: 23px; }
.scale-box svg { margin-top: 2px; }
.splitter { height: 6px; background: #222; flex: none; display: flex; justify-content: center; gap: 1px; overflow: hidden; }
.splitter i { width: 6px; height: 6px; border-radius: 3px; background: #454545; margin-top: 1px; }
.lower { display: flex; flex: 1; min-height: 0; }
.panel { width: 1255px; background: #272b30; }
.panel-track { flex: 1; background: #fafafa; margin-top: -1px; }
.pills { display: flex; height: 38px; margin: -1px 0 0 15px; }
.pill { display: flex; align-items: center; padding: 0 16px 1px; gap: 5px; color: #fff; border-radius: 4px; }
.pill span { width: 18.2px; font-weight: 500; letter-spacing: -.8px; white-space: nowrap; }
.pill.active { background: #3a3f44; }
.subtabs { display: flex; height: 36px; margin: 0 15px; border-bottom: 1px solid #101214; white-space: nowrap; }
.subtab { height: 36px; padding: 0 16px; border: 1px solid transparent; font-size: 13px; font-weight: 600; letter-spacing: -.62px; color: #fff; line-height: 33px; }
.subtab.active { border-color: #101214; border-bottom-color: #272b30; border-radius: 4px 4px 0 0; width: 138px; }
.query { display: flex; align-items: flex-start; padding: 8px 15px; }
.query-left { width: 418px; display: flex; align-items: center; }
.query-left span { width: 50px; font-size: 15.5px; letter-spacing: -.45px; padding-bottom: 3px; }
button { border: 0; padding: 0; }
.btn-clear { width: 67px; height: 48px; border-radius: 4px; background: #fff; color: #222; font: 15px "Noto Sans", sans-serif; }
.btn { height: 29px; border-radius: 3px; padding-bottom: 1px; }
.danger { width: 179px; background: #ea5e5f; color: #fff; font: 600 13px Inter, sans-serif; letter-spacing: -.25px; margin-right: 30px; }
.info { width: 284px; background: #62c0dc; color: #272b30; font: 13px "Noto Sans", sans-serif; letter-spacing: .15px; }
```
